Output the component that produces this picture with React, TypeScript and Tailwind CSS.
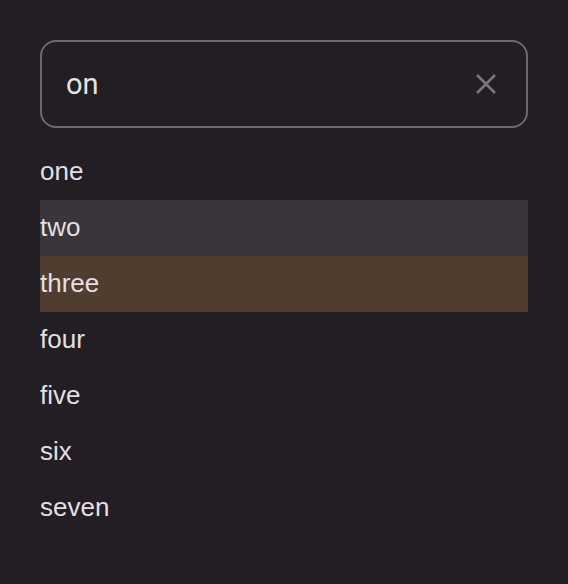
import React from "react";

const items = ["one", "two", "three", "four", "five", "six", "seven"];

export default function App() {
  return (
    <div className="min-h-[584px] w-full bg-[#221e23] px-[40px] pt-[40px]">
      <div className="flex h-[88px] items-center rounded-[16px] border-2 border-[#6e696e] pl-[24px] pr-[29px]">
        <span className="flex-1 pt-[2px] text-[29px] text-[#e6e1e6]" style={{ fontFamily: "Roboto, sans-serif" }}>
          on
        </span>
        <svg width="22" height="22" viewBox="0 0 22 22" className="text-[#7a757a]">
          <path d="M2 2 L20 20 M20 2 L2 20" stroke="currentColor" strokeWidth="2.6" fill="none" />
        </svg>
      </div>
      <ul className="mt-[16px] flex flex-col" style={{ fontFamily: '"Liberation Sans", Arial, sans-serif' }}>
        {items.map((it) => (
          <li
            key={it}
            className={
              "flex h-[56px] items-center pb-[2px] text-[26px] text-[#e3dfe3] " +
              (it === "two" ? "bg-[#39353b]" : it === "three" ? "bg-[#4f3e2f]" : "")
            }
          >
            {it}
          </li>
        ))}
      </ul>
    </div>
  );
}
